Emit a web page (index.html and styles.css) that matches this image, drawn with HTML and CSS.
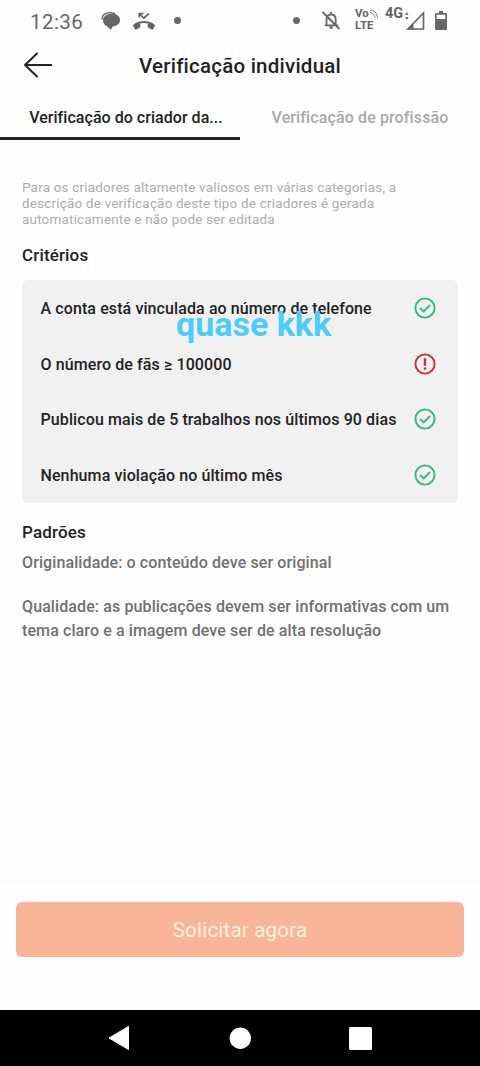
FILE: index.html
```html
<!DOCTYPE html>
<html lang="pt-BR">
<head>
<meta charset="utf-8">
<title>Verificação individual</title>
<link rel="stylesheet" href="styles.css">
</head>
<body>
<div class="screen">
  <div class="status">
    <span class="clock">12:36</span>
    <svg class="chat" width="20" height="20" viewBox="0 0 20 20"><path d="M1.300 8.500C.5 2.500 7 .5 14 2.500" fill="none" stroke="#777" stroke-width="1.600"/><path d="M11 2.800c5 0 8 2.500 8 6.300 0 3.500-2.600 5.900-7.500 6.400L9.800 19 6 15.200C3.300 14 2 12 2 9.500c0-4 3.700-6.700 9-6.700z" fill="#666"/></svg>
    <svg class="missed" width="24" height="20" viewBox="0 0 24 20"><path d="M2.500 14.500C7 9.800 17 9.800 21.500 14.500" fill="none" stroke="#666" stroke-width="2"/><path d="M1.300 14.500l3-2.500 3.500 1v3.200L3.500 18.300zM22.700 14.500l-3-2.500-3.500 1v3.200l4.300 2.100z" fill="#666" stroke="#666" stroke-linejoin="round"/><path d="M7.300 6.500V2.700h4.200M7.500 3l4.300 4L17 2.500" fill="none" stroke="#666" stroke-width="1.700"/></svg>
    <i class="dot"></i>
    <i class="dot dot-right"></i>
    <svg class="bell" width="20" height="20" viewBox="0 0 20 20" fill="none" stroke="#666" stroke-width="1.800"><path d="M4 15.300h13M5.500 15V9.500c0-3.100 1.700-5 4.500-5s4.700 1.900 4.700 5V15M10 2v2.500M1.500 2l17 17"/><path d="M8.500 17.500h3.200" stroke-width="2.500"/></svg>
    <div class="volte"><span>Vo</span><span>LTE</span><svg width="10" height="9" viewBox="0 0 10 9" fill="none" stroke="#777"><path d="M1 1c4 0 7 3 7.500 7.500M1 3.500c2.700 0 4.500 1.800 5 5"/></svg></div>
    <span class="network">4G</span>
    <svg class="signal" width="20" height="20" viewBox="0 0 20 20"><path d="M0 4L1.800 1 3.600 4zM0 6h3.600L1.800 9z" fill="#666"/><path d="M18.500 2v16H3z" fill="none" stroke="#666" stroke-width="1.600"/><path d="M2 18.800l6.500-7V18.800z" fill="#666"/></svg>
    <svg class="battery" width="12" height="20" viewBox="0 0 12 20"><path d="M4 0h4v2h2.800Q12 2 12 3.200v14.600q0 1.200-1.200 1.200H1.200Q0 19 0 17.800V3.200Q0 2 1.200 2H4z" fill="#666"/><path d="M1.700 3.700h8.600V8H1.700z" fill="#fff"/></svg>
  </div>

  <header class="header">
    <svg class="back" width="30" height="26" viewBox="0 0 30 26" fill="none" stroke="#222" stroke-width="2" stroke-linecap="round" stroke-linejoin="round"><path d="M28.300 13H2M14 1.500L2 13l12 11.500"/></svg>
    <h1 class="title">Verificação individual</h1>
  </header>

  <nav class="tabs">
    <div class="tab tab-active">Verificação do criador da...</div>
    <div class="tab tab-other">Verificação de profissão</div>
  </nav>

  <main class="content">
    <p class="intro">Para os criadores altamente valiosos em várias categorias, a<br>descrição de verificação deste tipo de criadores é gerada<br>automaticamente e não pode ser editada</p>
    <h2 class="section-title">Critérios</h2>
    <div class="card">
      <div class="row"><span>A conta está vinculada ao número de telefone</span><svg class="mark ok" width="22" height="22" viewBox="0 0 22 22"><circle cx="11" cy="11" r="9.600"/><path d="M6 11l3.700 3.400 6.300-6.400"/></svg></div>
      <div class="row"><span>O número de fãs ≥ 100000</span><svg class="mark fail" width="22" height="22" viewBox="0 0 22 22"><circle cx="11" cy="11" r="9.600"/><path d="M11 5.200v7.500M11 14.600v2.200" stroke-width="2.400"/></svg></div>
      <div class="row"><span>Publicou mais de 5 trabalhos nos últimos 90 dias</span><svg class="mark ok" width="22" height="22" viewBox="0 0 22 22"><circle cx="11" cy="11" r="9.600"/><path d="M6 11l3.700 3.400 6.300-6.400"/></svg></div>
      <div class="row"><span>Nenhuma violação no último mês</span><svg class="mark ok" width="22" height="22" viewBox="0 0 22 22"><circle cx="11" cy="11" r="9.600"/><path d="M6 11l3.700 3.400 6.300-6.400"/></svg></div>
      <div class="overlay">quase kkk</div>
    </div>
    <h2 class="section-title standards">Padrões</h2>
    <p class="detail">Originalidade: o conteúdo deve ser original</p>
    <p class="detail quality">Qualidade: as publicações devem ser informativas com um<br>tema claro e a imagem deve ser de alta resolução</p>
  </main>

  <footer class="action"><button class="apply" type="button">Solicitar agora</button></footer>

  <div class="navbar">
    <svg width="24" height="26" viewBox="0 0 24 26"><path d="M1 13L20.500 1.500v23z" fill="#fff" stroke="#fff" stroke-linejoin="round"/></svg>
    <svg width="24" height="26" viewBox="0 0 24 26"><circle cx="12.300" cy="13.300" r="10.700" fill="#fff"/></svg>
    <svg width="24" height="26" viewBox="0 0 24 26"><rect x="1" y="2" width="23" height="23" rx="1.500" fill="#fff"/></svg>
  </div>
</div>
</body>
</html>
```
FILE: styles.css
```css
* { box-sizing: border-box; }
body, h1, h2, p { margin: 0; }
body { font-family: Roboto, "Liberation Sans", sans-serif; background: #fefefe; }
.screen { width: 480px; height: 1066px; display: flex; flex-direction: column; overflow: hidden; white-space: nowrap; }

.status { height: 40px; flex: none; display: flex; align-items: flex-start; color: #666; }
.clock { width: 71px; padding-left: 30px; font-size: 20.5px; line-height: 24px; margin-top: 9.500px; letter-spacing: .45px; }
.status svg { flex: none; }
.chat { margin: 11px 0 0 30px; }
.missed { margin: 10.500px 0 0 11px; }
.dot { flex: none; width: 7px; height: 7px; margin: 16.500px 0 0 18px; border-radius: 50%; background: #666; }
.dot-right { margin-left: 112px; }
.bell { margin: 10px 0 0 21px; }
.volte { position: relative; flex: none; width: 24px; margin: 7px 0 0 14px; font-size: 11.5px; font-weight: 700; line-height: 12px; }
.volte span { display: block; }
.volte svg { position: absolute; left: 14px; top: 2px; }
.network { width: 19px; margin: 5px 0 0 6px; font-size: 14.5px; font-weight: 700; line-height: 18px; }
.signal { margin: 11px 0 0 1px; }
.battery { margin: 11px 0 0 10px; }

.header { height: 50px; flex: none; display: grid; grid-template-columns: 55px 370px 55px; align-items: center; }
.back { margin-left: 23px; }
.title { padding-top: 1px; font-size: 20.5px; font-weight: 500; line-height: 28px; text-align: center; letter-spacing: .23px; color: #222; }

.tabs { height: 50px; flex: none; display: grid; grid-template-columns: 240px 240px; }
.tab { display: flex; justify-content: center; padding-top: 17.500px; font-size: 16px; font-weight: 500; line-height: 20px; color: #a9a9a9; border-bottom: 3px solid transparent; }
.tab-active { color: #222; border-bottom-color: #222; padding-left: 12px; letter-spacing: .04px; }
.tab-other { letter-spacing: .12px; }

.content { flex: 1; padding: 39px 22px 0; }
.intro { font-size: 13.5px; line-height: 16px; letter-spacing: .18px; color: #adadad; }
.section-title { margin-top: 16px; font-size: 17px; font-weight: 500; line-height: 24px; letter-spacing: .15px; color: #222; }
.card { position: relative; height: 223px; margin-top: 13px; padding: 0 22px 0 18.500px; border-radius: 6px; background: #f1f1f2; display: grid; grid-template-rows: repeat(4, 1fr); }
.row { display: flex; align-items: center; justify-content: space-between; font-size: 16px; font-weight: 500; line-height: 20px; letter-spacing: .1px; color: #222; }
.row span { padding-top: 2px; }
.mark { flex: none; fill: none; stroke-width: 1.900; }
.ok { stroke: #36b978; }
.fail { stroke: #cf3039; }
.overlay { position: absolute; left: 154px; top: 24px; font-size: 34px; font-weight: 700; line-height: 40px; color: #4dcbfa; }
.standards { margin-top: 16.500px; }
.detail { margin-top: 7.500px; font-size: 16px; font-weight: 500; line-height: 24px; letter-spacing: .105px; color: #707070; }
.quality { margin-top: 19.500px; }

.action { height: 128px; flex: none; padding: 18px 16px 0; border-top: 2px solid #f9f9fb; }
.apply { display: block; width: 448px; height: 55px; padding: 0; border: 0; border-radius: 6px; background: #f8b59a; color: #fff0df; font: 400 20.5px/28px Roboto, "Liberation Sans", sans-serif; letter-spacing: .2px; }

.navbar { height: 56px; flex: none; background: #000; display: flex; justify-content: center; align-items: center; gap: 96px; }
```
